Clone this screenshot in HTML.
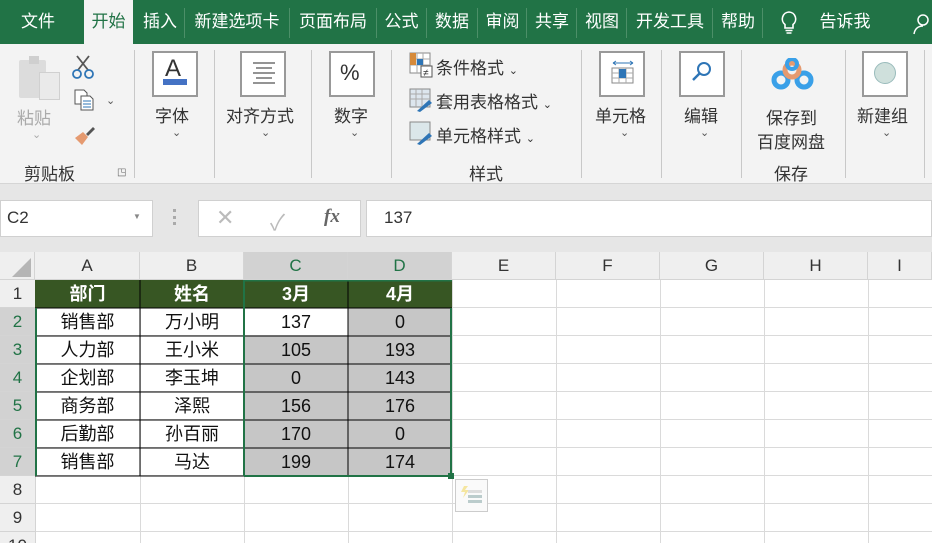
<!DOCTYPE html>
<html><head><meta charset="utf-8"><style>
*{margin:0;padding:0;box-sizing:border-box}
html,body{width:932px;height:543px;overflow:hidden}
body{background:#e6e6e6;font-family:"Liberation Sans","Noto Sans CJK SC",sans-serif;position:relative;color:#222}
.a{position:absolute}
.tab{position:absolute;top:0;height:44px;line-height:44px;color:#fff;font-size:17px;text-align:center}
.sep{position:absolute;top:8px;width:1px;height:30px;background:#4c8f68}
.gsep{position:absolute;top:50px;width:1px;height:128px;background:#c8c8c8}
.lbl{position:absolute;font-size:17px;color:#333;text-align:center;white-space:nowrap}
.box{position:absolute;width:46px;height:46px;border:2px solid #999;background:#fff}
.chev{position:absolute;font-size:11px;color:#555}
.ch{position:absolute;top:252px;height:28px;line-height:28px;text-align:center;font-size:17px;color:#333;border-right:1px solid #d4d4d4;background:#efefef}
.rh{position:absolute;left:0;width:35px;height:28px;line-height:28px;text-align:center;font-size:17px;color:#333;background:#efefef;border-bottom:1px solid #d4d4d4}
.c{position:absolute;height:28px;line-height:28px;text-align:center;font-size:18px;color:#111}
</style></head><body>
<div class="a" style="left:0;top:0;width:932px;height:44px;background:#217346"></div>
<div class="a" style="left:84px;top:0;width:49px;height:45px;background:#f3f3f3"></div>
<div class="tab" style="left:8px;width:60px">文件</div>
<div class="tab" style="left:84px;width:49px;color:#217346">开始</div>
<div class="tab" style="left:136px;width:48px">插入</div><div class="sep" style="left:184px"></div>
<div class="tab" style="left:186px;width:102px">新建选项卡</div><div class="sep" style="left:289px"></div>
<div class="tab" style="left:290px;width:86px">页面布局</div><div class="sep" style="left:376px"></div>
<div class="tab" style="left:377px;width:49px">公式</div><div class="sep" style="left:426px"></div>
<div class="tab" style="left:427px;width:50px">数据</div><div class="sep" style="left:477px"></div>
<div class="tab" style="left:478px;width:49px">审阅</div><div class="sep" style="left:526px"></div>
<div class="tab" style="left:527px;width:50px">共享</div><div class="sep" style="left:576px"></div>
<div class="tab" style="left:577px;width:50px">视图</div><div class="sep" style="left:626px"></div>
<div class="tab" style="left:627px;width:86px">开发工具</div><div class="sep" style="left:712px"></div>
<div class="tab" style="left:713px;width:50px">帮助</div><div class="sep" style="left:762px"></div>
<svg class="a" style="left:778px;top:10px" width="22" height="26" viewBox="0 0 22 26"><path d="M11 2a7 7 0 0 0-4 12.5V18h8v-3.5A7 7 0 0 0 11 2z M7.5 20.5h7 M8.5 23h5" fill="none" stroke="#fff" stroke-width="1.6"/></svg>
<div class="tab" style="left:812px;width:66px">告诉我</div>
<svg class="a" style="left:912px;top:12px" width="20" height="24"><circle cx="11" cy="8" r="5" fill="none" stroke="#fff" stroke-width="1.5"/><path d="M2 22c1-6 5-8 9-8" fill="none" stroke="#fff" stroke-width="1.5"/></svg>
<div class="a" style="left:0;top:44px;width:932px;height:140px;background:#f3f3f3;border-bottom:1px solid #d5d5d5"></div>
<div class="a" style="left:19px;top:60px;width:27px;height:38px;background:#dcdcdc;border-radius:2px"></div>
<div class="a" style="left:29px;top:56px;width:10px;height:8px;background:#cfcfcf"></div>
<div class="a" style="left:39px;top:72px;width:21px;height:28px;background:#eaeaea;border:1px solid #d0d0d0"></div>
<div class="lbl" style="left:17px;top:104px;color:#aaa">粘贴</div>
<div class="chev" style="left:32px;top:128px;color:#aaa">⌄</div>
<svg class="a" style="left:71px;top:54px" width="24" height="26"><path d="M6 2l11 14 M18 2L7 16" stroke="#555" stroke-width="1.8" fill="none"/><circle cx="6" cy="20" r="4" fill="none" stroke="#2e75b6" stroke-width="1.8"/><circle cx="18" cy="20" r="4" fill="none" stroke="#2e75b6" stroke-width="1.8"/></svg>
<svg class="a" style="left:73px;top:88px" width="22" height="24"><path d="M2 2h9l3 3v11H2z" fill="#fff" stroke="#555"/><path d="M8 8h9l3 3v11H8z" fill="#fff" stroke="#555"/><path d="M10 13h8M10 16h8M10 19h8" stroke="#2e75b6"/></svg>
<div class="chev" style="left:106px;top:94px">⌄</div>
<svg class="a" style="left:72px;top:124px" width="24" height="22"><path d="M14 10l7-7 2 2-7 7z" fill="#555"/><path d="M3 14l8-6 5 5-6 8z" fill="#e59a70"/></svg>
<div class="lbl" style="left:24px;top:160px">剪贴板</div>
<div class="a" style="left:117px;top:167px;font-size:10px;color:#666">◳</div>
<div class="gsep" style="left:134px"></div>
<div class="box" style="left:152px;top:51px"></div>
<div class="a" style="left:165px;top:55px;font-size:24px;color:#333">A</div>
<div class="a" style="left:163px;top:79px;width:24px;height:6px;background:#4472c4"></div>
<div class="lbl" style="left:155px;top:102px">字体</div>
<div class="chev" style="left:172px;top:126px">⌄</div>
<div class="gsep" style="left:214px"></div>
<div class="box" style="left:240px;top:51px"></div>
<svg class="a" style="left:252px;top:60px" width="24" height="28"><path d="M1 3h22M4 8h16M1 13h22M4 18h16M1 23h22" stroke="#555" stroke-width="1.2"/></svg>
<div class="lbl" style="left:226px;top:102px">对齐方式</div>
<div class="chev" style="left:261px;top:126px">⌄</div>
<div class="gsep" style="left:311px"></div>
<div class="box" style="left:329px;top:51px"></div>
<div class="a" style="left:340px;top:60px;font-size:22px;color:#333">%</div>
<div class="lbl" style="left:334px;top:102px">数字</div>
<div class="chev" style="left:350px;top:126px">⌄</div>
<div class="gsep" style="left:391px"></div>
<svg class="a" style="left:409px;top:52px" width="24" height="26"><rect x="1" y="1" width="20" height="20" fill="#fff" stroke="#888"/><path d="M1 7h20M1 13h20M8 1v20M14 1v20" stroke="#aaa"/><rect x="1" y="1" width="6" height="12" fill="#d68a3a"/><rect x="8" y="7" width="6" height="6" fill="#2e75b6"/><rect x="12" y="14" width="11" height="11" fill="#fff" stroke="#555"/><text x="14" y="24" font-size="10" fill="#333">≠</text></svg>
<div class="lbl" style="left:436px;top:54px">条件格式 <span style="font-size:11px">⌄</span></div>
<svg class="a" style="left:409px;top:88px" width="24" height="24"><rect x="1" y="1" width="20" height="18" fill="#dde6ee" stroke="#888"/><path d="M1 6h20M1 11h20M7 1v18M13 1v18" stroke="#aaa"/><path d="M8 23l12-11 3 3-12 9z" fill="#2e75b6"/></svg>
<div class="lbl" style="left:436px;top:88px">套用表格格式 <span style="font-size:11px">⌄</span></div>
<svg class="a" style="left:409px;top:121px" width="24" height="24"><rect x="1" y="1" width="20" height="18" fill="#dbe7ea" stroke="#888"/><path d="M8 23l12-11 3 3-12 9z" fill="#2e75b6"/></svg>
<div class="lbl" style="left:436px;top:122px">单元格样式 <span style="font-size:11px">⌄</span></div>
<div class="lbl" style="left:469px;top:160px">样式</div>
<div class="gsep" style="left:581px"></div>
<div class="box" style="left:599px;top:51px"></div>
<svg class="a" style="left:610px;top:60px" width="26" height="26"><path d="M3 3h20M3 3l3-2M3 3l3 2M23 3l-3-2M23 3l-3 2" stroke="#2e75b6" fill="none"/><rect x="2" y="8" width="21" height="15" fill="#fff" stroke="#888"/><path d="M2 13h21M2 18h21M9 8v15M16 8v15" stroke="#aaa"/><rect x="9" y="9" width="7" height="9" fill="#2e75b6"/></svg>
<div class="lbl" style="left:595px;top:102px">单元格</div>
<div class="chev" style="left:620px;top:126px">⌄</div>
<div class="gsep" style="left:661px"></div>
<div class="box" style="left:679px;top:51px"></div>
<svg class="a" style="left:690px;top:60px" width="24" height="24"><circle cx="14" cy="9" r="6" fill="none" stroke="#2e75b6" stroke-width="2"/><path d="M10 13l-7 7" stroke="#2e75b6" stroke-width="2.5"/></svg>
<div class="lbl" style="left:684px;top:102px">编辑</div>
<div class="chev" style="left:700px;top:126px">⌄</div>
<div class="gsep" style="left:741px"></div>
<svg class="a" style="left:771px;top:58px" width="44" height="34"><circle cx="10" cy="22" r="7" fill="none" stroke="#3aa0e8" stroke-width="5"/><circle cx="33" cy="22" r="7" fill="none" stroke="#3aa0e8" stroke-width="5"/><circle cx="21" cy="12" r="7" fill="none" stroke="#e59a70" stroke-width="5"/><circle cx="21" cy="6" r="5" fill="none" stroke="#3aa0e8" stroke-width="4"/></svg>
<div class="lbl" style="left:766px;top:104px">保存到</div>
<div class="lbl" style="left:757px;top:128px">百度网盘</div>
<div class="lbl" style="left:774px;top:160px">保存</div>
<div class="gsep" style="left:845px"></div>
<div class="box" style="left:862px;top:51px"></div>
<div class="a" style="left:874px;top:62px;width:22px;height:22px;border-radius:50%;background:#cfe0dc;border:1px solid #9bb"></div>
<div class="lbl" style="left:857px;top:102px">新建组</div>
<div class="chev" style="left:882px;top:126px">⌄</div>
<div class="gsep" style="left:924px"></div>
<div class="a" style="left:0;top:200px;width:153px;height:37px;background:#fff;border:1px solid #d0d0d0"></div>
<div class="a" style="left:7px;top:208px;font-size:17px;color:#333">C2</div>
<div class="a" style="left:133px;top:212px;font-size:8px;color:#888">▼</div>
<div class="a" style="left:173px;top:209px;width:3px;height:16px;border-left:3px dotted #aaa"></div>
<div class="a" style="left:198px;top:200px;width:163px;height:37px;background:#fff;border:1px solid #d0d0d0"></div>
<div class="a" style="left:216px;top:205px;font-size:22px;color:#bbb">✕</div>
<div class="a" style="left:270px;top:205px;font-size:22px;color:#bbb">✓</div>
<div class="a" style="left:324px;top:206px;font-size:19px;color:#666;font-style:italic;font-family:'Liberation Serif',serif;font-weight:bold">fx</div>
<div class="a" style="left:366px;top:200px;width:566px;height:37px;background:#fff;border:1px solid #d0d0d0"></div>
<div class="a" style="left:384px;top:208px;font-size:17px;color:#333">137</div>
<div class="a" style="left:0;top:252px;width:932px;height:291px;background:#fff"></div>
<div class="a" style="left:0;top:252px;width:35px;height:28px;background:#efefef;border-right:1px solid #d4d4d4"></div>
<svg class="a" style="left:10px;top:256px" width="22" height="22"><path d="M21 2L21 21 2 21z" fill="#b5b5b5"/></svg>
<div class="ch" style="left:35px;width:105px">A</div>
<div class="ch" style="left:140px;width:104px">B</div>
<div class="ch" style="left:244px;width:104px;background:#d2d2d2;color:#217346">C</div>
<div class="ch" style="left:348px;width:104px;background:#d2d2d2;color:#217346">D</div>
<div class="ch" style="left:452px;width:104px">E</div>
<div class="ch" style="left:556px;width:104px">F</div>
<div class="ch" style="left:660px;width:104px">G</div>
<div class="ch" style="left:764px;width:104px">H</div>
<div class="ch" style="left:868px;width:64px">I</div>
<div class="a" style="left:0;top:279px;width:932px;height:1px;background:#d4d4d4"></div>
<div class="a" style="left:35px;top:280px;width:1px;height:263px;background:#d4d4d4"></div>
<svg class="a" style="left:0;top:280px" width="932" height="263">
<g stroke="#dadada" stroke-width="1">
<path d="M140.5 0V263M244.5 0V263M348.5 0V263M452.5 0V263M556.5 0V263M660.5 0V263M764.5 0V263M868.5 0V263"/>
<path d="M36 27.5H932M36 55.5H932M36 83.5H932M36 111.5H932M36 139.5H932M36 167.5H932M36 195.5H932M36 223.5H932M36 251.5H932"/>
</g></svg>
<div class="rh" style="top:280px">1</div>
<div class="rh" style="top:308px;background:#d2d2d2;color:#217346">2</div>
<div class="rh" style="top:336px;background:#d2d2d2;color:#217346">3</div>
<div class="rh" style="top:364px;background:#d2d2d2;color:#217346">4</div>
<div class="rh" style="top:392px;background:#d2d2d2;color:#217346">5</div>
<div class="rh" style="top:420px;background:#d2d2d2;color:#217346">6</div>
<div class="rh" style="top:448px;background:#d2d2d2;color:#217346">7</div>
<div class="rh" style="top:476px">8</div>
<div class="rh" style="top:504px">9</div>
<div class="rh" style="top:532px">10</div>
<div class="a" style="left:35px;top:280px;width:417px;height:28px;background:#375623"></div>
<div class="a" style="left:244px;top:336px;width:208px;height:140px;background:#c6c6c6"></div>
<div class="a" style="left:348px;top:308px;width:104px;height:28px;background:#c6c6c6"></div>
<svg class="a" style="left:0;top:280px" width="460" height="200">
<g stroke="#000" stroke-width="1">
<path d="M140 0V196M244 0V196M348 0V196"/>
<path d="M35 28H452M35 56H452M35 84H452M35 112H452M35 140H452M35 168H452M35 196H244"/>
</g>
<g stroke="#217346" stroke-width="2" fill="none">
<path d="M36 28V196M244 0V196M451 28V196M244 0.5H452M244 196H452"/>
</g>
<rect x="448" y="193" width="6" height="6" fill="#217346"/>
</svg>
<div class="c" style="left:35px;top:280px;width:105px;color:#fff;font-weight:bold">部门</div>
<div class="c" style="left:140px;top:280px;width:104px;color:#fff;font-weight:bold">姓名</div>
<div class="c" style="left:244px;top:280px;width:104px;color:#fff;font-weight:bold">3月</div>
<div class="c" style="left:348px;top:280px;width:104px;color:#fff;font-weight:bold">4月</div>
<div class="c" style="left:35px;top:308px;width:105px">销售部</div><div class="c" style="left:140px;top:308px;width:104px">万小明</div><div class="c" style="left:244px;top:308px;width:104px">137</div><div class="c" style="left:348px;top:308px;width:104px">0</div>
<div class="c" style="left:35px;top:336px;width:105px">人力部</div><div class="c" style="left:140px;top:336px;width:104px">王小米</div><div class="c" style="left:244px;top:336px;width:104px">105</div><div class="c" style="left:348px;top:336px;width:104px">193</div>
<div class="c" style="left:35px;top:364px;width:105px">企划部</div><div class="c" style="left:140px;top:364px;width:104px">李玉坤</div><div class="c" style="left:244px;top:364px;width:104px">0</div><div class="c" style="left:348px;top:364px;width:104px">143</div>
<div class="c" style="left:35px;top:392px;width:105px">商务部</div><div class="c" style="left:140px;top:392px;width:104px">泽熙</div><div class="c" style="left:244px;top:392px;width:104px">156</div><div class="c" style="left:348px;top:392px;width:104px">176</div>
<div class="c" style="left:35px;top:420px;width:105px">后勤部</div><div class="c" style="left:140px;top:420px;width:104px">孙百丽</div><div class="c" style="left:244px;top:420px;width:104px">170</div><div class="c" style="left:348px;top:420px;width:104px">0</div>
<div class="c" style="left:35px;top:448px;width:105px">销售部</div><div class="c" style="left:140px;top:448px;width:104px">马达</div><div class="c" style="left:244px;top:448px;width:104px">199</div><div class="c" style="left:348px;top:448px;width:104px">174</div>
<div class="a" style="left:455px;top:479px;width:33px;height:33px;border:1px solid #ccc;background:#fafafa"></div>
<svg class="a" style="left:460px;top:484px" width="24" height="24"><path d="M4 2l-3 6h4l-2 6 6-8H5l3-4z" fill="#f5e6a0"/><rect x="8" y="6" width="14" height="3" fill="#ddd"/><rect x="8" y="11" width="14" height="3" fill="#bcc"/><rect x="8" y="16" width="14" height="3" fill="#bcc"/></svg>
</body></html>
